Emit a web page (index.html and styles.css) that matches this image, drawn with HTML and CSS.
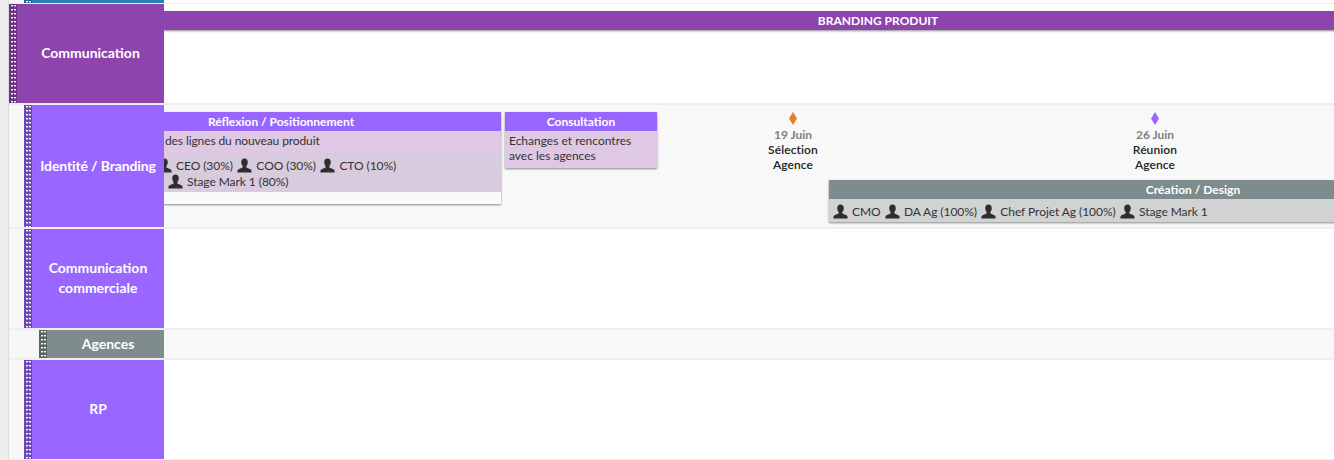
FILE: index.html
```html
<!DOCTYPE html>
<html lang="fr">
<head>
<meta charset="utf-8">
<title>Planning</title>
<link rel="stylesheet" href="styles.css">
</head>
<body>
<svg class="defs" width="0" height="0" aria-hidden="true">
  <symbol id="person" viewBox="0 0 16 16">
    <path d="M8 .6c-2.300 0-3.500 1.800-3.500 4 0 1.500.6 3 1.400 4 .3.400.3 1-.1 1.400-.9.800-3.500 1.300-4.600 2.300-.6.500-.8 1.300-.8 3.100h15.200c0-1.800-.2-2.600-.8-3.100-1.100-1-3.700-1.500-4.600-2.300-.4-.4-.4-1-.1-1.400.8-1 1.400-2.500 1.400-4 0-2.200-1.200-4-3.500-4z"/>
  </symbol>
</svg>
<div class="rail"></div>
<main class="plan">
  <section class="row row-top indent-1">
    <div class="handle handle-blue"></div>
    <div class="label label-blue"></div>
    <div class="timeline"></div>
  </section>

  <section class="row row-comm indent-0">
    <div class="handle handle-purple"></div>
    <div class="label label-purple">Communication</div>
    <div class="timeline">
      <div class="bar bar-branding">BRANDING PRODUIT</div>
    </div>
  </section>

  <section class="row row-identite indent-1">
    <div class="handle handle-violet"></div>
    <div class="label label-violet label-tight">Identité / Branding</div>
    <div class="timeline timeline-grey">
      <article class="task task-reflexion">
        <header class="task-title">Réflexion / Positionnement</header>
        <p class="task-desc desc-clipped">des lignes du nouveau produit</p>
        <div class="people people-tint">
          <div class="people-line line-clipped">
            <span class="person"><svg class="icon"><use href="#person"/></svg>CEO (30%)</span>
            <span class="person"><svg class="icon"><use href="#person"/></svg>COO (30%)</span>
            <span class="person"><svg class="icon"><use href="#person"/></svg>CTO (10%)</span>
          </div>
          <div class="people-line line-second">
            <span class="person"><svg class="icon"><use href="#person"/></svg>Stage Mark 1 (80%)</span>
          </div>
        </div>
        <div class="task-foot"></div>
      </article>

      <article class="task task-consultation">
        <header class="task-title">Consultation</header>
        <p class="task-desc">Echanges et rencontres<br>avec les agences</p>
      </article>

      <div class="milestone milestone-selection">
        <span class="diamond diamond-orange"></span>
        <span class="ms-date">19 Juin</span>
        <span class="ms-name">Sélection<br>Agence</span>
      </div>

      <div class="milestone milestone-reunion">
        <span class="diamond diamond-violet"></span>
        <span class="ms-date">26 Juin</span>
        <span class="ms-name">Réunion<br>Agence</span>
      </div>

      <article class="task task-creation">
        <header class="task-title title-grey">Création / Design</header>
        <div class="people people-grey">
          <div class="people-line">
            <span class="person"><svg class="icon"><use href="#person"/></svg>CMO</span>
            <span class="person"><svg class="icon"><use href="#person"/></svg>DA Ag (100%)</span>
            <span class="person"><svg class="icon"><use href="#person"/></svg>Chef Projet Ag (100%)</span>
            <span class="person"><svg class="icon"><use href="#person"/></svg>Stage Mark 1</span>
          </div>
        </div>
      </article>
    </div>
  </section>

  <section class="row row-commerciale indent-1">
    <div class="handle handle-violet"></div>
    <div class="label label-violet">Communication<br>commerciale</div>
    <div class="timeline"></div>
  </section>

  <section class="row row-agences indent-2">
    <div class="handle handle-grey"></div>
    <div class="label label-grey label-agences">Agences</div>
    <div class="timeline timeline-grey"></div>
  </section>

  <section class="row row-rp indent-1">
    <div class="handle handle-violet"></div>
    <div class="label label-violet">RP</div>
    <div class="timeline"></div>
  </section>
</main>
</body>
</html>
```
FILE: styles.css
```css
* { box-sizing: border-box; }
html, body { margin: 0; height: 460px; overflow: hidden; }
body {
  display: flex;
  background: #fff;
  font-family: Lato, "Open Sans", sans-serif;
  font-size: 12px;
  color: #333;
}
.defs { position: absolute; }
.rail { flex: 0 0 9px; background: #eee; border-right: 1px solid #ddd; }
.plan { flex: 1; min-width: 0; display: flex; flex-direction: column; }

.row { display: flex; background: #f7f7f7; border-bottom: 2px solid #eee; }
.row-top { height: 4px; border-bottom-width: 1px; }
.row-comm { height: 101px; }
.row-identite { height: 124px; }
.row-commerciale { height: 101px; }
.row-agences { height: 30px; }
.row-rp { height: 100px; border-bottom-width: 1px; }
.indent-0 { padding-left: 0; }
.indent-1 { padding-left: 15px; }
.indent-2 { padding-left: 30px; }

.handle {
  flex: 0 0 8px;
  background-image:
    linear-gradient(#fff 1px, rgba(255, 255, 255, .4) 1px, rgba(255, 255, 255, .4) 2px, transparent 2px),
    linear-gradient(#fff 1px, rgba(255, 255, 255, .4) 1px, rgba(255, 255, 255, .4) 2px, transparent 2px);
  background-size: 2px 4px;
  background-position: 2px 1px, 5px 1px;
  background-repeat: repeat-y;
}
.handle-blue { background-color: #1f6590; }
.handle-purple { background-color: #6a3382; }
.handle-violet { background-color: #6d49b3; }
.handle-grey { background-color: #5a6464; }

.label {
  display: flex;
  align-items: center;
  justify-content: center;
  text-align: center;
  flex: 1;
  min-width: 0;
  padding-bottom: 2px;
  color: #fff;
  font-size: 14px;
  font-weight: 700;
  line-height: 20px;
}
.label-tight { padding-bottom: 0; letter-spacing: -.13px; }
.label-agences { padding-bottom: 0; padding-left: 5px; }
.label-blue { background: #2980b9; }
.label-purple { background: #8e44ad; }
.label-violet { background: #96f; }
.label-grey { background: #7f8c8d; }

.timeline {
  flex: 0 0 1170px;
  position: relative;
  overflow: hidden;
  background: #fff;
}
.timeline-grey { background: #f8f8f8; }

.bar {
  position: absolute;
  left: 0;
  top: 7px;
  width: 1428px;
  height: 19px;
  background: #8e44ad;
  box-shadow: 0 1px 2px rgba(0, 0, 0, .45);
  color: #fff;
  font-weight: 700;
  line-height: 19px;
  text-align: center;
}

.task {
  position: absolute;
  background: #fff;
  box-shadow: 0 1px 2px rgba(0, 0, 0, .45);
}
.task-reflexion { left: -103px; top: 7px; width: 440px; }
.task-consultation { left: 341px; top: 7px; width: 152px; }
.task-creation { left: 665px; top: 75px; width: 728px; }

.task-title {
  height: 19px;
  background: #96f;
  color: #fff;
  font-weight: 700;
  line-height: 19px;
  text-align: center;
}
.title-grey { background: #7f8c8d; }

.task-desc {
  margin: 0;
  padding: 2px 4px 5px;
  background: #dfc8e4;
  line-height: 15px;
}
.task-reflexion .task-desc { height: 23px; }
.desc-clipped { padding-left: 104px; letter-spacing: -.1px; }

.people { line-height: 17px; }
.people-tint { height: 38px; padding-top: 3px; background: #d8cbdd; }
.people-grey { height: 23px; padding-top: 4px; background: #d1d3d3; }
.task-foot { height: 12px; background: #fafafa; }
.people-line { display: flex; gap: 4.4px; padding-left: 4px; letter-spacing: -.06px; }
.line-clipped { padding-left: 96px; gap: 4.5px; }
.line-second { padding-left: 107px; margin-top: -1px; }
.person { display: inline-flex; align-items: center; gap: 4px; white-space: nowrap; }
.icon { width: 15px; height: 15px; fill: #2e2e2e; flex: none; }

.milestone {
  position: absolute;
  top: 7px;
  width: 100px;
  display: flex;
  flex-direction: column;
  align-items: center;
  text-align: center;
  line-height: 15px;
}
.milestone-selection { left: 579px; }
.milestone-reunion { left: 941px; }
.diamond {
  width: 8px;
  height: 13px;
  margin-bottom: 2px;
  clip-path: polygon(50% 0, 100% 50%, 50% 100%, 0 50%);
}
.diamond-orange { background: #e67e22; }
.diamond-violet { background: #96f; }
.ms-date { color: #7f7f7f; font-weight: 700; line-height: 15px; }
.ms-name { color: #222; font-weight: 600; letter-spacing: .1px; }
```
